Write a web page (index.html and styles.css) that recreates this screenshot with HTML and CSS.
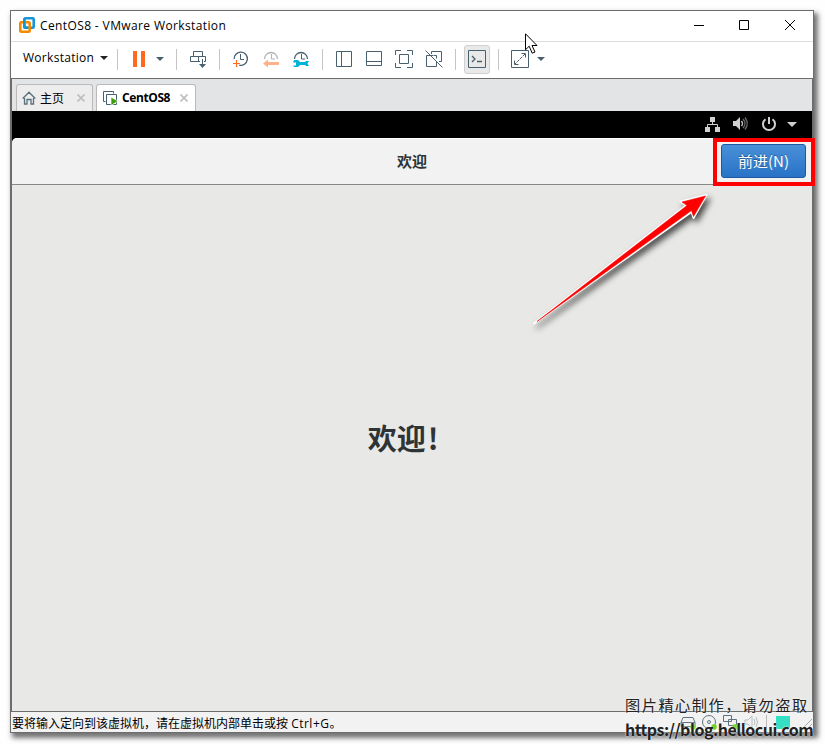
FILE: index.html
```html
<!DOCTYPE html>
<html lang="zh-CN">
<head>
<meta charset="utf-8">
<title>CentOS8 - VMware Workstation</title>
<link rel="stylesheet" href="styles.css">
</head>
<body>
<main class="window">
  <header class="titlebar">
    <svg class="logo" width="16" height="16" viewBox="0 0 16 16" fill="none" stroke-width="2.6"><rect x="5.3" y="1.3" width="9.4" height="9.4" rx="1" stroke="#1595d3"/><path d="M5 5.3H2.3q-1 0-1 1v7.4q0 1 1 1h7.4q1 0 1-1V6.3q0-1-1-1H7" stroke="#f38b00"/><path d="M5.3 3v6.7q0 1 1 1H9" stroke="#1595d3"/></svg>
    <span class="title">CentOS8 - VMware Workstation</span>
    <svg class="controls" width="102" height="12" viewBox="0 0 102 12" fill="none" stroke="#000"><path d="M0 6.5h10M45.500 1.500h9v9h-9zM91 1l10 10M101 1L91 11"/></svg>
  </header>

  <nav class="toolbar">
    <div class="group menu"><span>Workstation</span><i class="caret dark"></i></div>
    <div class="group power"><i class="pause"></i><i class="caret"></i></div>
    <div class="group single">
      <svg width="20" height="20" viewBox="0 0 20 20" fill="none" stroke="#48606e"><path d="M5.500 7V2.500h9V7M12 12.500H2.500v-5h15v5H16M10.500 7.500v5M14.500 10v6"/><path d="M11 15h7l-3.500 4z" fill="#48606e" stroke="none"/></svg>
    </div>
    <div class="group snapshots">
      <svg width="20" height="20" viewBox="0 0 20 20" fill="none"><path d="M3.200 10a6.600 6.600 0 1 1 5 6.100" stroke="#48606e" stroke-width="1.300"/><path d="M9.500 5v5.500H13" stroke="#48606e"/><path d="M2 14.500h7M5.500 11v7" stroke="#ff6a1f" stroke-width="1.200"/></svg>
      <svg width="20" height="20" viewBox="0 0 20 20" fill="none"><path d="M3.500 10a6.500 6.500 0 1 1 13 0" stroke="#aeb4b8" stroke-width="1.300"/><path d="M10.500 5v5H14" stroke="#aeb4b8"/><path d="M2 14.500l5-4V13h11v3H7v2.500z" fill="#ffb18e"/></svg>
      <svg width="20" height="20" viewBox="0 0 20 20" fill="none"><path d="M3.500 10a6.500 6.500 0 1 1 13 0" stroke="#48606e" stroke-width="1.300"/><path d="M10.500 5v5H14" stroke="#48606e"/><path d="M3 11h4l2 2h5l1-1h3l-1.500 2.500L18 17h-3l-1-1H9l-2 2H3l-1-1.500h3v-3H2z" fill="#00b4d8"/></svg>
    </div>
    <div class="group views">
      <svg width="20" height="20" viewBox="0 0 20 20" fill="none" stroke="#48606e"><path d="M2.500 2.500h15v15h-15zM7.500 2v15"/></svg>
      <svg width="20" height="20" viewBox="0 0 20 20" fill="none" stroke="#48606e"><path d="M2.500 2.500h15v14h-15zM2 12.500h16"/></svg>
      <svg width="20" height="20" viewBox="0 0 20 20" fill="none" stroke="#48606e"><path d="M5.500 5.500h9v9h-9zM1.500 6V1.500H7M13 1.500h5.500V6M1.500 14v4.500H7M13 18.500h5.500V14"/></svg>
      <svg width="20" height="20" viewBox="0 0 20 20" fill="none" stroke="#48606e"><path d="M7.500 5V2.500h10v10H15M9 6.500H2.500v11h10V12M1.500 1.500l17 17M9.500 6.500h3v3"/></svg>
    </div>
    <div class="group console"><span class="pressed">
      <svg width="20" height="20" viewBox="0 0 20 20" fill="none" stroke="#48606e"><path d="M1.500 1.500h17v17h-17z"/><path d="M5 7l3 3-3 3M10 12.500h5" stroke-width="1.300"/></svg></span>
    </div>
    <div class="group stretch">
      <svg width="20" height="20" viewBox="0 0 20 20" fill="none" stroke="#48606e"><path d="M1.500 1.500h17v17h-17zM11.500 4.500h4v4M4.500 11.500v4h4"/><path d="M15 5L5 15" stroke-dasharray="3 1"/></svg>
      <i class="caret"></i>
    </div>
  </nav>

  <div class="tabs">
    <div class="tab home">
      <svg width="14" height="14" viewBox="0 0 14 14" fill="none" stroke="#59707e" stroke-width="1.300"><path d="M.7 7.500L7 1.200l6.300 6.300M2.500 7v6H5V8.500h4V13h2.500V7"/></svg>
      <span>主页</span>
      <svg class="close" width="8" height="8" viewBox="0 0 8 8"><path d="M.5.5l7 7M7.500.5l-7 7" stroke="#bfbfbf" stroke-width="1.700"/></svg>
    </div>
    <div class="tab active">
      <svg width="16" height="16" viewBox="0 0 16 16" fill="none" stroke="#48606e"><path d="M2.500 11.500h-2v-10h10v2M3.500 4.500h10v10h-10z"/><path d="M8 7l7 4.200L8 15.500z" fill="#3d9b0c" stroke="#fff" stroke-width=".7"/></svg>
      <span>CentOS8</span>
      <svg class="close" width="8" height="8" viewBox="0 0 8 8"><path d="M.5.5l7 7M7.500.5l-7 7" stroke="#bfbfbf" stroke-width="1.700"/></svg>
    </div>
  </div>

  <section class="guest">
    <div class="topbar">
      <svg width="94" height="16" viewBox="0 0 94 16" fill="none"><path d="M5 1h5v5H5zM0 11h5v5H0zM10 11h5v5h-5z" fill="#d0d0d0"/><path d="M7.500 5v3.500M2.500 11V8.500h10V11" stroke="#d0d0d0"/><path d="M28 5h3l4-4v13l-4-4h-3z" fill="#d0d0d0"/><path d="M36.500 5q2 2.500 0 5" stroke="#bbb" stroke-width="1.400"/><path d="M38 3q4 4.500 0 9M40 1.500q4.500 6 0 12" stroke="#666" stroke-width="1.400"/><path d="M60.500 3.200a6 6 0 1 0 7 0M64 1v7" stroke="#d0d0d0" stroke-width="2"/><path d="M82 6h10l-5 5z" fill="#d0d0d0"/></svg>
    </div>
    <div class="headerbar"><h2>欢迎</h2><div class="highlight"><button>前进(N)</button></div></div>
    <div class="content"><h1>欢迎<span>!</span></h1></div>
  </section>

  <footer class="status">
    <span class="hint">要将输入定向到该虚拟机，请在虚拟机内部单击或按 <span class="keys">Ctrl+G</span>。</span>
    <svg width="133" height="20" viewBox="0 0 133 20" fill="none"><g stroke="#60727e"><path d="M3 5.500h10l2 5v4H1v-4zM1 10.500h14"/><circle cx="29" cy="10" r="6.500"/><circle cx="29" cy="10" r="1.500"/><path d="M43.500 3.500h8v6h-8zM48.500 7.500h8v6h-8z" fill="#f2f2f2"/></g><path d="M65 8h3l4-4v12l-4-4h-3zM74 7q2 3 0 6M76 5q3 5 0 10" stroke="#b8bec2"/><circle cx="13" cy="15" r="2.700" fill="#67d414"/><circle cx="34" cy="15" r="2.700" fill="#67d414"/><circle cx="55" cy="15" r="2.700" fill="#67d414"/><path d="M86.500 3v15" stroke="#bbb"/><path d="M96 4h14v11l-2 2H96z" fill="#35dfc4"/><path d="M121 18l11-11M126 18l6-6" stroke="#aaa"/></svg>
  </footer>
</main>

<svg class="arrow" width="200" height="160" viewBox="520 180 200 160"><path d="M534 323.500L686 205.500l-5.500-4 26-6.500-13 23-2-6z" fill="#fff" stroke="#fff" stroke-width="2" stroke-linejoin="round"/><path d="M537 321.500L687 205.500l-5-3.500 23.500-6-12 20.500-2-6z" fill="#f00" stroke="#f00" stroke-width=".6"/></svg>
<svg class="cursor" width="13" height="22" viewBox="0 0 13 22"><path d="M.5.8v16l3.700-3.600 3 7 2.800-1.200-3-6.500h5z" fill="#fff" stroke="#000"/></svg>
<div class="watermark"><div class="credit">图片精心制作，请勿盗取</div><div class="url">https://blog.hellocui.com</div></div>
</body>
</html>
```
FILE: styles.css
```css
* { box-sizing: border-box; }
body { margin: 0; padding: 10px; width: 825px; height: 744px; overflow: hidden; background: #fefefe; font-family: "Open Sans", "Noto Sans CJK SC", sans-serif; font-size: 12px; color: #000; }
svg { display: block; flex: none; }
.window { width: 804px; height: 723px; display: flex; flex-direction: column; border: 1px solid #6d6d6d; background: #fff; box-shadow: 3px 4px 5px 1px rgba(0,0,0,.55); }

.titlebar { height: 30px; display: flex; align-items: center; padding: 0 17px 0 8px; }
.logo { margin-right: 5px; margin-top: -2px; }
.title { flex: 1; white-space: nowrap; letter-spacing: .38px; margin-top: -2px; }
.controls { margin-top: -2px; }

.toolbar { height: 38px; display: flex; align-items: flex-start; padding-top: 7px; border-top: 1px solid #dedede; border-bottom: 1px solid #6c6c6c; }
.group { height: 21px; display: flex; align-items: center; border-right: 1px solid #c5c5c5; padding-left: 11px; gap: 10px; }
.group > svg { margin-top: -1px; }
.caret { width: 0; height: 0; border: 4px solid transparent; border-top-color: #48606e; border-bottom: 0; margin-top: -1px; }
.caret.dark { border-top-color: #222; margin-top: -3px; }
.menu { width: 107px; padding-left: 12px; gap: 6px; }
.menu span { width: 71px; margin-top: -4px; letter-spacing: .28px; }
.power { width: 59px; padding-left: 15px; gap: 11px; }
.pause { width: 12px; height: 16px; border: solid #ff6a1f; border-width: 0 4px; margin-top: -1px; }
.single { width: 43px; }
.snapshots { width: 103px; }
.views { width: 133px; }
.console { width: 43px; padding-left: 8px; }
.pressed { width: 26px; height: 29px; display: grid; place-items: center; border: 1px solid #d0d0d0; border-radius: 3px; background: #e9e9e9; }
.pressed svg { margin-top: -1px; }
.stretch { border: 0; gap: 7px; }

.tabs { height: 32px; padding: 5px 0 0 4px; display: flex; gap: 3px; background: #e3e4e6; border-left: 1px solid #6c6c6c; border-right: 1px solid #6c6c6c; }
.tab { height: 27px; display: flex; align-items: center; border: 1px solid #bababa; border-bottom: 0; border-radius: 3px 3px 0 0; background: #ededed; }
.home { width: 77px; padding-left: 5px; gap: 4px; }
.home span { width: 26px; }
.active { width: 100px; background: #fff; padding-left: 6px; gap: 3px; }
.active span { width: 48px; margin-top: -1px; font-weight: 700; letter-spacing: -.4px; }
.close { margin-left: 7px; margin-top: -1px; }

.guest { flex: 1; display: flex; flex-direction: column; border: 1px solid #6c6c6c; border-top: 0; background: #000; min-height: 0; }
.topbar { height: 27px; display: flex; justify-content: flex-end; padding: 5px 13px 0 0; }
.headerbar { height: 47px; display: flex; align-items: center; justify-content: center; position: relative; background: #f2f2f2; border-bottom: 1px solid #888884; border-radius: 5px 0 0; box-shadow: inset 0 1px #fff; }
h1, h2 { margin: 0; color: #2e3436; font-family: "Noto Sans CJK SC", sans-serif; font-weight: 700; }
h2 { font-size: 15px; line-height: 22px; }
.highlight { position: absolute; right: -3px; top: 0; width: 102px; height: 48px; padding: 2px 4px; border: 4px solid #f00; background: #f2f2f2; }
button { display: block; width: 85px; height: 34px; padding: 0; border: 1px solid #1b5aa0; border-radius: 3px; background: linear-gradient(#4a90d9, #2873c7); color: #fff; font: 400 15px/30px "Noto Sans CJK SC", sans-serif; text-shadow: 0 -1px #285b91; }
.content { flex: 1; display: flex; justify-content: center; padding-top: 229px; background: #e8e8e7; }
h1 { font-size: 29px; line-height: 46px; padding-right: 18px; }
h1 span { margin-left: 2px; }
.status { height: 20px; display: flex; justify-content: space-between; align-items: center; background: #f2f2f2; padding-left: 1px; white-space: nowrap; }
.hint { padding-top: 2px; }
.keys { letter-spacing: .5px; }

.arrow { position: absolute; left: 520px; top: 180px; filter: drop-shadow(3px 4px 3px rgba(0,0,0,.7)); }
.cursor { position: absolute; left: 525px; top: 33px; }
.watermark { position: absolute; left: 625px; top: 692px; color: #222; white-space: nowrap; text-shadow: 0 0 2px #fff; }
.credit { font: 400 15.200px/24px "Noto Sans CJK SC", sans-serif; letter-spacing: 1.500px; }
.url { font: 700 16px/26px "Noto Sans CJK SC", sans-serif; letter-spacing: -.5px; }
```
